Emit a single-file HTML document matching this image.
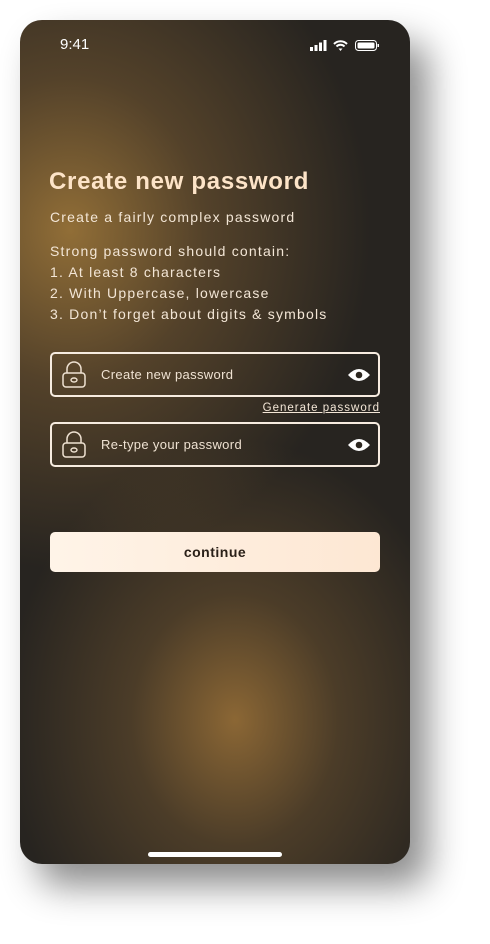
<!DOCTYPE html>
<html><head><meta charset="utf-8"><style>
*{margin:0;padding:0;box-sizing:border-box}
body{width:490px;height:944px;background:#fff;position:relative;overflow:hidden;font-family:"Liberation Sans",sans-serif}
.phone{position:absolute;left:20px;top:20px;width:390px;height:844px;border-radius:22px;overflow:hidden;
background:
radial-gradient(ellipse 230px 280px at 215px 700px,rgba(150,110,55,0.9),rgba(120,90,50,0.45) 45%,rgba(60,50,40,0) 100%),
radial-gradient(ellipse 300px 340px at 50px 210px,rgba(145,110,55,1),rgba(120,90,50,0.55) 45%,rgba(60,50,40,0) 100%),
#272420;
box-shadow:18px 22px 36px rgba(0,0,0,0.45)}
.t{position:absolute;color:#f3e6d6;white-space:nowrap}
.field{position:absolute;left:30px;width:330px;height:45px;border:2px solid #f7ece0;border-radius:5px}
.field span{position:absolute;left:49px;top:13px;font-size:13px;letter-spacing:0.35px;color:#efe2d2}
.btn{position:absolute;left:30px;top:512px;width:330px;height:40px;border-radius:5px;background:linear-gradient(90deg,#fff4e8,#fde7d3);text-align:center;line-height:40px;font-weight:bold;font-size:14px;letter-spacing:0.5px;color:#2a2018}
</style></head><body>
<div class="phone">
<div class="t" style="left:40px;top:16px;font-size:15px;color:#fff">9:41</div>
<svg style="position:absolute;left:290px;top:19px" width="72" height="14">
<rect x="0" y="8" width="3" height="4" fill="#fff"/><rect x="4.5" y="6" width="3" height="6" fill="#fff"/><rect x="9" y="3.5" width="3" height="8.5" fill="#fff"/><rect x="13.5" y="1" width="3" height="11" fill="#fff"/>
<path d="M24 5 A9 9 0 0 1 37 5 M26.5 7.5 A5.5 5.5 0 0 1 34.5 7.5" stroke="#fff" stroke-width="2" fill="none"/><path d="M28.5 9.5 L30.5 12 L32.5 9.5 Z" fill="#fff"/>
<rect x="45.5" y="1.5" width="21" height="10" rx="3" stroke="#fff" fill="none"/><rect x="47.5" y="3.5" width="17" height="6" rx="1.5" fill="#fff"/><rect x="67.5" y="5" width="1.5" height="3" fill="#fff"/>
</svg>
<div class="t" style="left:29px;top:148px;font-size:24px;letter-spacing:0.7px;font-weight:bold;color:#fde4c8">Create new password</div>
<div class="t" style="left:30px;top:189px;font-size:14px;letter-spacing:1.2px">Create a fairly complex password</div>
<div class="t" style="left:30px;top:221px;font-size:14px;letter-spacing:1.2px;line-height:21px">Strong password should contain:<br>1. At least 8 characters<br>2. With Uppercase, lowercase<br>3. Don’t forget about digits &amp; symbols</div>
<div class="field" style="top:332px"><svg style="position:absolute;left:9px;top:7px" width="28" height="28"><path d="M6 12 V8 A7 7 0 0 1 20 8 V12" stroke="#efe2d2" stroke-width="1.5" fill="none"/><rect x="2" y="12" width="22" height="14" rx="3" stroke="#efe2d2" stroke-width="1.5" fill="none"/><ellipse cx="13" cy="19" rx="3" ry="2" stroke="#efe2d2" stroke-width="1.4" fill="none"/></svg><span>Create new password</span>
<svg style="position:absolute;right:7px;top:13px" width="24" height="16"><path d="M1 8 Q12 -4 23 8 Q12 20 1 8Z" fill="#fff"/><circle cx="12" cy="8" r="3.3" fill="#2d2720"/></svg></div>
<div class="t" style="right:30px;top:382px;font-size:11.5px;letter-spacing:1px;text-decoration:underline">Generate password</div>
<div class="field" style="top:402px"><svg style="position:absolute;left:9px;top:7px" width="28" height="28"><path d="M6 12 V8 A7 7 0 0 1 20 8 V12" stroke="#efe2d2" stroke-width="1.5" fill="none"/><rect x="2" y="12" width="22" height="14" rx="3" stroke="#efe2d2" stroke-width="1.5" fill="none"/><ellipse cx="13" cy="19" rx="3" ry="2" stroke="#efe2d2" stroke-width="1.4" fill="none"/></svg><span>Re-type your password</span>
<svg style="position:absolute;right:7px;top:13px" width="24" height="16"><path d="M1 8 Q12 -4 23 8 Q12 20 1 8Z" fill="#fff"/><circle cx="12" cy="8" r="3.3" fill="#2d2720"/></svg></div>
<div class="btn">continue</div>
<div style="position:absolute;left:128px;top:832px;width:134px;height:5px;border-radius:3px;background:#fff"></div>
</div>
</body></html>
